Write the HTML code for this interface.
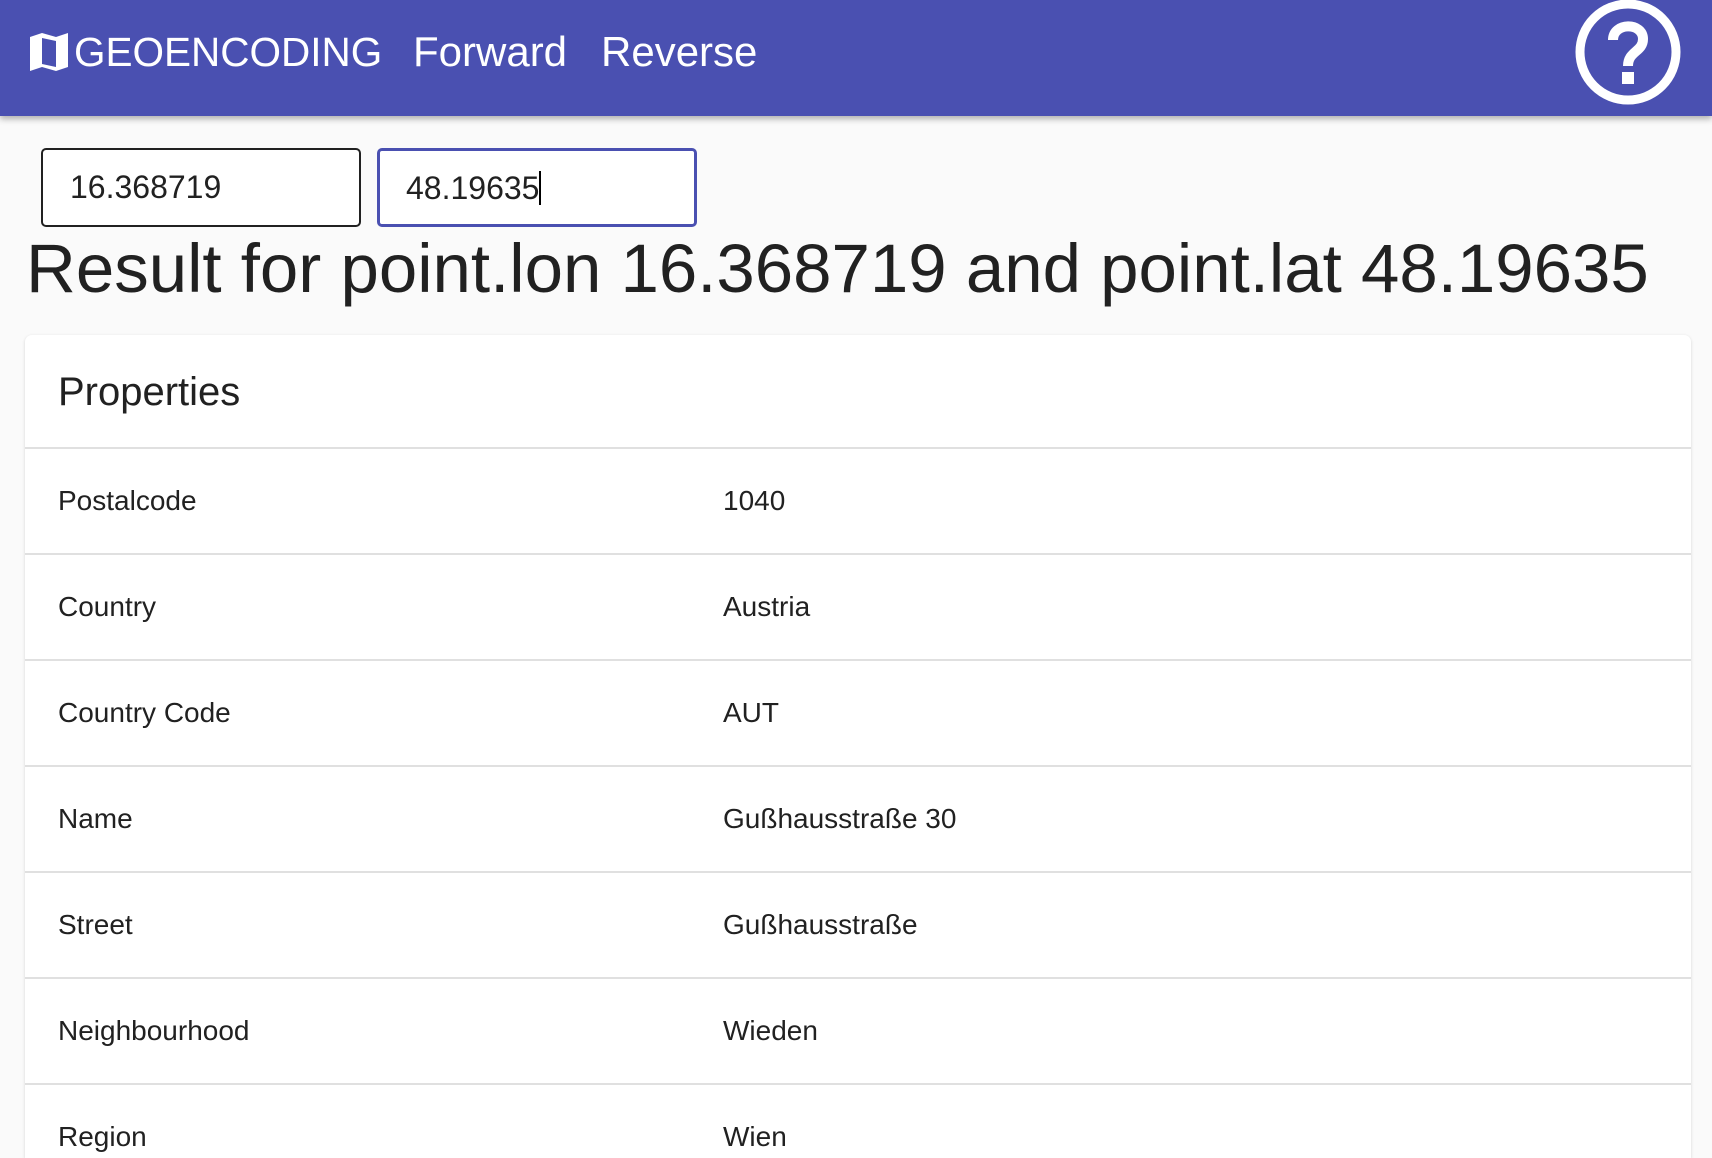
<!DOCTYPE html>
<html><head><meta charset="utf-8"><style>
*{margin:0;padding:0;box-sizing:border-box}
html,body{width:1712px;height:1158px;overflow:hidden;background:#fafafa;font-family:"Liberation Sans",Arial,sans-serif;color:#212121}
.hdr{position:absolute;left:0;top:0;width:1712px;height:116px;background:#4a50b1;box-shadow:0 3px 6px rgba(0,0,0,.3);color:#fff;font-size:42px}
.hdr span{position:absolute;top:28px;line-height:48px}
.inp{position:absolute;top:148px;height:79px;background:#fff;border-radius:5px;font-size:32px;padding-left:27px;line-height:75px}
.card{position:absolute;left:25px;top:335px;width:1666px;height:823px;background:#fff;border-radius:7px 7px 0 0;box-shadow:0 1px 3px rgba(0,0,0,.15);overflow:hidden}
.t{position:absolute;font-size:28px;white-space:nowrap}
.d{position:absolute;left:0;width:1666px;height:2px;background:#e0e0e0}
</style></head><body>
<div class="hdr">
<svg style="position:absolute;left:30px;top:33px" width="38" height="38" viewBox="0 0 38 38"><path d="M0 4 L12 0 L26 4 L38 0 L38 34 L26 38 L12 34 L0 38 Z M12 5 L12 31 L26 34 L26 8 Z" fill="#fff" fill-rule="evenodd"/></svg>
<span style="left:74px;font-size:40.5px">GEOENCODING</span>
<span style="left:413px">Forward</span>
<span style="left:601px">Reverse</span>
<svg style="position:absolute;left:1574px;top:0" width="108" height="106" viewBox="0 0 108 106"><circle cx="54" cy="52" r="48" fill="none" stroke="#fff" stroke-width="9"/><path d="M39 40 C39 22 69 22 69 39 C69 52 54 51 54 66" fill="none" stroke="#fff" stroke-width="10"/><rect x="48" y="72" width="12" height="12" fill="#fff"/></svg>
</div>
<div class="inp" style="left:41px;width:320px;border:2px solid #212121">16.368719</div>
<div class="inp" style="left:377px;width:320px;border:3px solid #4a50b1;padding-left:26px">48.19635<span style="display:inline-block;width:2px;height:34px;background:#000;vertical-align:-6px"></span></div>
<div style="position:absolute;left:26px;top:228px;font-size:69px;line-height:82px;white-space:nowrap">Result for point.lon 16.368719 and point.lat 48.19635</div>
<div class="card">
<div class="t" style="left:33px;top:33px;font-size:40px;line-height:48px">Properties</div>
<div class="d" style="top:112px"></div>
<div class="t" style="left:33px;top:150px">Postalcode</div><div class="t" style="left:698px;top:150px">1040</div>
<div class="d" style="top:218px"></div>
<div class="t" style="left:33px;top:256px">Country</div><div class="t" style="left:698px;top:256px">Austria</div>
<div class="d" style="top:324px"></div>
<div class="t" style="left:33px;top:362px">Country Code</div><div class="t" style="left:698px;top:362px">AUT</div>
<div class="d" style="top:430px"></div>
<div class="t" style="left:33px;top:468px">Name</div><div class="t" style="left:698px;top:468px">Gußhausstraße 30</div>
<div class="d" style="top:536px"></div>
<div class="t" style="left:33px;top:574px">Street</div><div class="t" style="left:698px;top:574px">Gußhausstraße</div>
<div class="d" style="top:642px"></div>
<div class="t" style="left:33px;top:680px">Neighbourhood</div><div class="t" style="left:698px;top:680px">Wieden</div>
<div class="d" style="top:748px"></div>
<div class="t" style="left:33px;top:786px">Region</div><div class="t" style="left:698px;top:786px">Wien</div>
</div>
</body></html>
